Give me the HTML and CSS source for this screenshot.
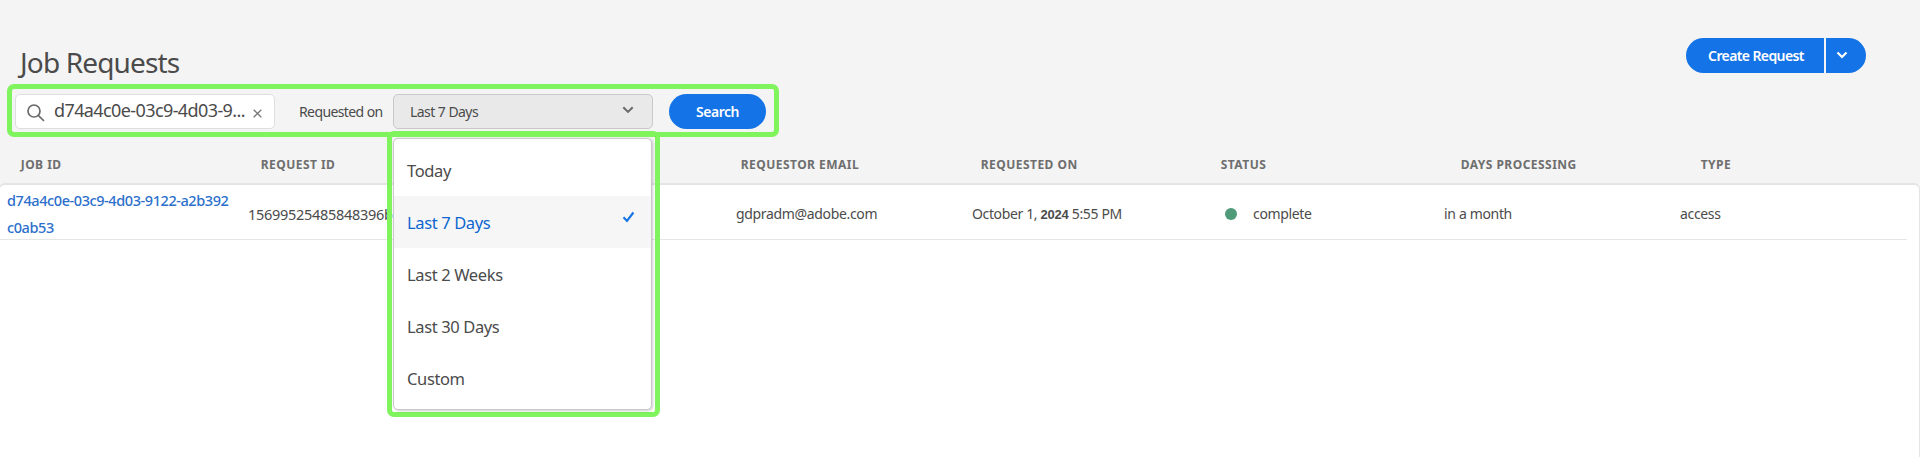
FILE: index.html
```html
<!DOCTYPE html>
<html lang="en">
<head>
<meta charset="utf-8">
<title>Job Requests</title>
<link rel="stylesheet" href="styles.css">
</head>
<body>
<header class="page-header">
  <h1 class="title">Job Requests</h1>
  <div class="split-button">
    <button class="create"><span>Create Request</span></button>
    <button class="create-more" aria-label="More"><svg width="12" height="8" viewBox="0 0 12 8"><path d="M1.5 1.5 6 6l4.5-4.5"/></svg></button>
  </div>
</header>
<section class="filters">
  <div class="search-box">
    <svg class="magnifier" width="18" height="18" viewBox="0 0 18 18"><circle cx="7" cy="7" r="6"/><path d="M11.3 11.3 17 17"/></svg>
    <span class="query">d74a4c0e-03c9-4d03-9...</span>
    <svg class="clear" width="9" height="9" viewBox="0 0 9 9"><path d="M.7.7l7.6 7.6M8.3.7.7 8.3"/></svg>
  </div>
  <label class="filter-label">Requested on</label>
  <div class="picker">
    <div class="select"><span>Last 7 Days</span><svg width="12" height="8" viewBox="0 0 12 8"><path d="M1.3 1.2 6 5.9l4.7-4.7"/></svg></div>
    <div class="menu-frame">
      <ul class="menu">
        <li>Today</li>
        <li class="selected">Last 7 Days<svg width="13" height="12" viewBox="0 0 13 12"><path d="M1.5 6.3 5 10 11.4 1.5"/></svg></li>
        <li>Last 2 Weeks</li>
        <li>Last 30 Days</li>
        <li>Custom</li>
      </ul>
    </div>
  </div>
  <button class="search-button">Search</button>
</section>
<div class="columns">
  <span>JOB ID</span><span>REQUEST ID</span><span></span><span>REQUESTOR EMAIL</span><span>REQUESTED ON</span><span>STATUS</span><span>DAYS PROCESSING</span><span>TYPE</span>
</div>
<main class="table-body">
  <div class="row">
    <a class="job-id">d74a4c0e-03c9-4d03-9122-a2b392<br>c0ab53</a>
    <span class="request-id">15699525485848396b</span>
    <span class="email">gdpradm@adobe.com</span>
    <span class="date">October 1, <b>2024</b> 5:55 PM</span>
    <span class="status"><i class="dot"></i>complete</span>
    <span class="days">in a month</span>
    <span class="type">access</span>
  </div>
</main>
</body>
</html>
```
FILE: styles.css
```css
* { box-sizing: border-box; }
body {
  margin: 0;
  height: 457px;
  overflow: hidden;
  display: flex;
  flex-direction: column;
  background: #f4f4f4;
  color: #4b4b4b;
  font: 14px/20px "Noto Sans", "Open Sans", sans-serif;
}
svg { fill: none; flex: none; }
button { border: 0; padding: 0; font: inherit; color: #fff; background: #1473e6; }
.page-header {
  height: 84px;
  padding: 38px 54px 0 20px;
  display: flex;
  justify-content: space-between;
  align-items: flex-start;
}
.title { margin: 4px 0 0; font-size: 28px; line-height: 40px; font-weight: 400; letter-spacing: -.85px; }
.split-button { display: flex; gap: 2px; height: 34.5px; }
.create { width: 138px; padding: 1px 0 0 2px; border-radius: 18px 0 0 18px; font-weight: 600; letter-spacing: -.6px; }
.create-more { width: 40px; padding: 0 8px 2px 0; border-radius: 0 18px 18px 0; }
.create-more svg { stroke: #fff; stroke-width: 2.2; }
.filters {
  width: 772px;
  height: 53px;
  margin-left: 7px;
  padding: 5px 3px;
  display: flex;
  align-items: flex-start;
  border: 5px solid #80f45c;
  border-radius: 7px;
}
.search-box {
  width: 260px;
  height: 35px;
  padding: 0 12px 0 11px;
  display: flex;
  align-items: center;
  background: #fff;
  border: 1px solid #dedede;
  border-radius: 5px;
}
.magnifier { stroke: #6a6a6a; stroke-width: 1.7; margin-top: 2px; }
.query { flex: 1; margin: -3px 0 0 9px; font-size: 18px; letter-spacing: -.6px; white-space: nowrap; }
.clear { stroke: #777; stroke-width: 1.3; margin-top: 4px; }
.filter-label { width: 94px; margin: 8px 0 0 24px; letter-spacing: -.6px; }
.picker { position: relative; }
.select {
  width: 260px;
  height: 35px;
  padding: 0 18px 0 16px;
  display: flex;
  align-items: center;
  justify-content: space-between;
  background: #e9e9e9;
  border: 1px solid #c9c9c9;
  border-radius: 5px;
  letter-spacing: -.55px;
}
.select svg { stroke: #6a6a6a; stroke-width: 2; margin-top: -3px; }
.search-button { width: 97px; height: 35px; margin-left: 16px; border-radius: 18px; font-weight: 600; letter-spacing: -.5px; }
.menu-frame {
  position: absolute;
  z-index: 2;
  left: -6px;
  top: 37px;
  width: 273px;
  height: 286px;
  padding: 2px 1px;
  border: 5px solid #80f45c;
  border-radius: 7px;
}
.menu {
  width: 259px;
  height: 272px;
  margin: 0;
  padding: 5px 0;
  list-style: none;
  background: #fff;
  border: 1px solid #c9c9c9;
  border-radius: 5px;
  box-shadow: 1px 1px 3px #0003;
  font-size: 16.5px;
  letter-spacing: -.37px;
}
.menu li { height: 52px; padding: 2px 16px 0 13px; display: flex; align-items: center; justify-content: space-between; }
.menu .selected { color: #0d66d0; background: #f6f6f6; }
.selected svg { stroke: #1473e6; stroke-width: 2.1; margin-top: -12px; }
.columns {
  height: 46px;
  padding: 18px 0 0 20.7px;
  display: grid;
  grid-template-columns: repeat(8, 240px);
  color: #6e6e6e;
  font-size: 12px;
  font-weight: 700;
  letter-spacing: .47px;
}
.table-body {
  flex: 1;
  margin-left: -1px;
  background: #fff;
  border: 1px solid #e4e4e4;
  border-top-width: 2px;
  border-bottom: 0;
  border-radius: 6px 6px 0 0;
}
.row {
  width: 1907px;
  height: 55px;
  padding: 2px 0 0 7px;
  display: grid;
  grid-template-columns: 241px 488px 236px 253px 219px 236px 1fr;
  align-items: center;
  border-bottom: 1px solid #e6e6e6;
  letter-spacing: -.34px;
}
.job-id { color: #2c6fcb; font-size: 14.5px; line-height: 27px; font-weight: 500; letter-spacing: -.42px; }
.request-id { font-size: 14.5px; letter-spacing: -.3px; }
.date { letter-spacing: -.37px; }
.date b { font: 700 13px "Liberation Sans", sans-serif; letter-spacing: -.2px; }
.status { display: flex; align-items: center; }
.dot { width: 12px; height: 12px; margin-right: 16px; border-radius: 50%; background: #4f9a78; }
```
